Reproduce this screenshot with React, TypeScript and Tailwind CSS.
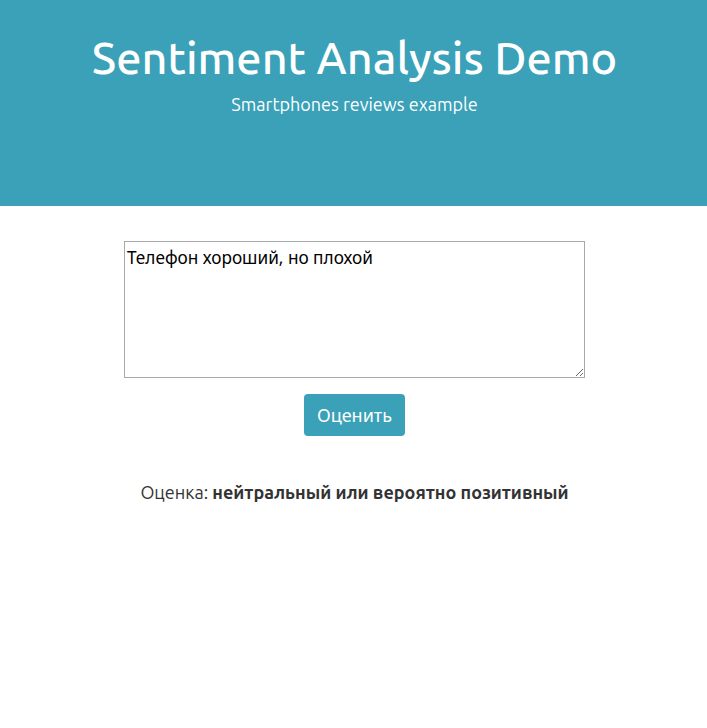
import { useState } from "react";

export default function App() {
  const [text, setText] = useState("Телефон хороший, но плохой");
  return (
    <div className="flex flex-col w-full min-h-screen bg-white font-['Ubuntu','Noto_Sans',sans-serif]">
      {/* Header */}
      <header className="flex flex-col items-center w-full h-[206px] pt-[29px] pl-[2px] bg-[#3aa1b8] text-white">
        <h1 className="text-[45px] leading-[58px] font-medium">Sentiment Analysis Demo</h1>
        <p className="mt-[5px] text-[18px] leading-[24px]">Smartphones reviews example</p>
      </header>

      {/* Form */}
      <main className="flex flex-col items-center w-full pt-[35px] pl-[2px]">
        <textarea
          value={text}
          onChange={(e) => setText(e.target.value)}
          className="w-[461px] h-[137px] px-[2px] pt-[2px] pb-0 border border-[#a9a9a9] text-[17.2px] leading-[28px] text-black font-['Noto_Sans',sans-serif] outline-none"
        />
        <button
          type="button"
          className="mt-[16px] w-[101px] h-[42px] rounded-[4px] bg-[#3aa1b8] text-white text-[18px] font-['Noto_Sans',sans-serif]"
        >
          Оценить
        </button>
        <p className="mt-[44px] text-[18px] leading-[24px] text-[#333333]">
          Оценка: <b className="font-bold">нейтральный или вероятно позитивный</b>
        </p>
      </main>
    </div>
  );
}
